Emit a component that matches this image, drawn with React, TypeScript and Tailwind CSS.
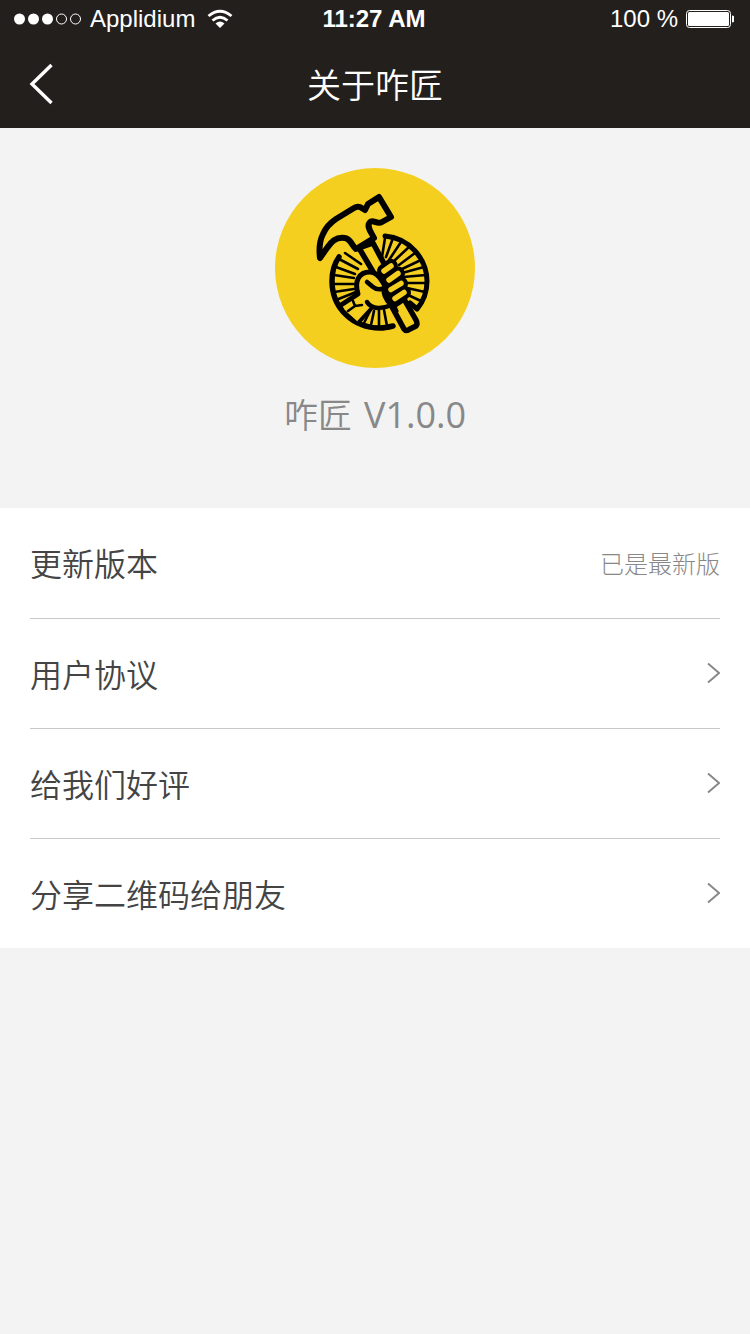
import React from "react";

function Chevron() {
  return (
    <svg className="h-6 w-4 shrink-0" viewBox="0 0 16 24" fill="none" stroke="#888888" strokeWidth="1.900" aria-hidden="true">
      <path d="M4 2.500L15 12L4 21.500" />
    </svg>
  );
}

const fingers = [
  "M384 271L391 266",
  "M389 280L398 273.500",
  "M391 289.500L401 283.500",
  "M395 298.500L404 292.500",
];

const rays = [
  "M385 238L382 257",
  "M393 238L386 257",
  "M401 242L389 260",
  "M409 247L394 261",
  "M415 253L399 265",
  "M421 260L402 269",
  "M424 267L402 273",
  "M426 275L403 277",
  "M426 283L405 283",
  "M425 292L407 288",
  "M421 301L408 295",
  "M345 253L361 264",
  "M339 259L358 269",
  "M336 267L355 274",
  "M334 275L354 278",
  "M333 284L354 284",
  "M334 292L354 289",
  "M336 300L356 292",
  "M370 311L364 323",
  "M374 311L371 325",
  "M379 310L379 326",
  "M384 310L387 326",
];

function Logo() {
  return (
    <svg className="size-50" viewBox="275 168 200 200" role="img" aria-label="咋匠">
      <circle cx="375" cy="268" r="100" fill="#f4cf20" />
      <g fill="none" stroke="#000" strokeLinecap="round" strokeLinejoin="round">
        <g strokeWidth="2.600">
          {rays.map((d) => (
            <path key={d} d={d} />
          ))}
        </g>
        <path strokeWidth="5" d="M385 236A46 46 0 0 1 427 281C427 292 423 302 417 309L410 303" />
        <path strokeWidth="5.500" d="M339 257C334 264 332 272 332 281C332 308 353 328 380 328C385 328 389 327 393 326" />
        <path fill="#f4cf20" strokeWidth="5.500" d="M359 248L385 292L396 286L373 243Z" />
        <path
          fill="#f4cf20"
          strokeWidth="6"
          d="M320 258C319 250 320 240 323 234C326 227 330 223 336 219L354 208Q357 206 360 207L365 210L368 204L379 197L391 217L382 222C377 225 373 219 370 222C366 226 371 232 374 238L356 249C352 246 351 239 345 238C335 236 330 244 327 248Z"
        />
        <path
          fill="#f4cf20"
          stroke="none"
          d="M358 281C362 273 371 270 379 276L389 300L394 307L370 310L358 322L344 309L358 297Z"
        />
        <path strokeWidth="5" d="M341 305L358 294C354 281 359 272 370 272C375 272 379 276 382 281L387 288" />
        <path strokeWidth="4.500" d="M367 282L373 287C376 289.500 380 290 384 288C383 294 386 300 391 305C383 309 372 310 367 302" />
        <path strokeWidth="4" d="M371 309L359 322" />
        <path strokeWidth="2.600" d="M348 311L355 306L362 305M355 306L353 301" />
        <path fill="#f4cf20" strokeWidth="5.500" d="M392 307L404 329Q406 332 410 329L416 326Q418 324 416 320L404 299Z" />
        <path strokeWidth="5" d="M384 284L396 311" />
        {fingers.map((d) => (
          <path key={d} d={d} strokeWidth="14" />
        ))}
        {fingers.map((d) => (
          <path key={d} d={d} stroke="#f4cf20" strokeWidth="5.500" />
        ))}
      </g>
    </svg>
  );
}

function StatusBar() {
  return (
    <div className="grid h-10 grid-cols-[1fr_auto_1fr] items-start pr-4 pl-3.5 font-['Liberation_Sans',sans-serif] text-2xl leading-[38px]">
      <div className="flex h-[37px] items-center">
        <svg className="h-3 w-17 shrink-0" viewBox="0 0 68 12" aria-hidden="true">
          <g fill="#fff">
            <circle cx="5.500" cy="6" r="5.500" />
            <circle cx="19.500" cy="6" r="5.500" />
            <circle cx="33.500" cy="6" r="5.500" />
          </g>
          <g fill="none" stroke="#fff">
            <circle cx="47.500" cy="6" r="5" />
            <circle cx="61.500" cy="6" r="5" />
          </g>
        </svg>
        <span className="ml-2">Applidium</span>
        <svg className="ml-3 h-5 w-6.5 shrink-0" viewBox="0 0 26 20" fill="none" stroke="#fff" aria-hidden="true">
          <path strokeWidth="2.800" d="M1.500 7Q13 -2.500 24.500 7" />
          <path strokeWidth="2.800" d="M5.500 11.500Q13 5 20.500 11.500" />
          <path fill="#fff" stroke="none" d="M8.500 14.500Q13 10.500 17.500 14.500L13 19Z" />
        </svg>
      </div>
      <span className="font-bold">11:27 AM</span>
      <div className="flex h-[37px] items-center justify-end gap-2">
        <span>100 %</span>
        <svg className="h-5 w-12 shrink-0" viewBox="0 0 48 20" aria-hidden="true">
          <rect x="0.500" y="1.500" width="44" height="17" rx="3" fill="none" stroke="#fff" />
          <rect x="2" y="3" width="41" height="14" rx="1.500" fill="#fff" />
          <path d="M46 6.500Q49 7 49 10Q49 13 46 13.500Z" fill="#fff" />
        </svg>
      </div>
    </div>
  );
}

const links = ["用户协议", "给我们好评", "分享二维码给朋友"];

export default function App() {
  return (
    <div className="min-h-screen bg-[#f3f3f3] font-['Noto_Sans_CJK_SC',sans-serif] font-[350] text-[#444444]">
      <header className="bg-[#231f1d] text-white">
        <StatusBar />
        <div className="grid h-22 grid-cols-[1fr_auto_1fr] items-center px-7">
          <button type="button" aria-label="返回" className="w-7">
            <svg className="h-11 w-7" viewBox="0 0 28 44" fill="none" stroke="#fff" strokeWidth="3.400" aria-hidden="true">
              <path d="M23.500 3L4 22L23.500 41" />
            </svg>
          </button>
          <h1 className="text-[34px] leading-12 font-[350]">关于咋匠</h1>
        </div>
      </header>
      <main>
        <section className="flex h-95 flex-col items-center pt-10">
          <Logo />
          <p className="mt-5 flex items-baseline gap-3 text-[34px] leading-13 text-[#888888]">
            <span>咋匠</span>
            <span className="font-['Open_Sans',sans-serif] text-[36px] font-normal">V1.0.0</span>
          </p>
        </section>
        <ul className="bg-white px-[30px] text-[32px]">
          <li className="flex h-[110px] items-center justify-between">
            <span className="pb-0.5">更新版本</span>
            <span className="text-2xl font-light text-[#888888]">已是最新版</span>
          </li>
          {links.map((label) => (
            <li key={label} className="h-[110px] border-t border-[#c8c8c8]">
              <a href="#" className="flex h-full items-center justify-between pb-0.5">
                <span>{label}</span>
                <Chevron />
              </a>
            </li>
          ))}
        </ul>
      </main>
    </div>
  );
}
